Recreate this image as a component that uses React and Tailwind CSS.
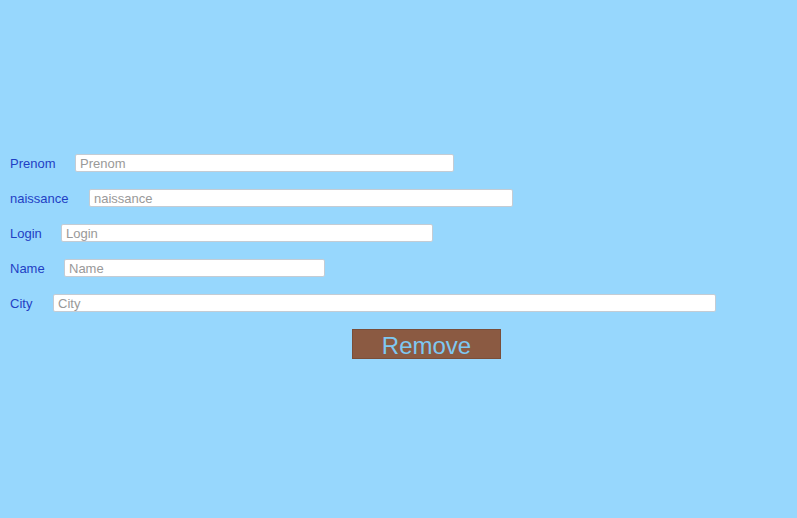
import React from "react";

const rows = [
  { label: "Prenom", x: 75, w: 379 },
  { label: "naissance", x: 89, w: 424 },
  { label: "Login", x: 61, w: 372 },
  { label: "Name", x: 64, w: 261 },
  { label: "City", x: 53, w: 663 },
];

export default function App() {
  return (
    <div
      className="w-[797px] h-[518px] bg-[#97d7fd] pt-[154px] pl-[10px]"
      style={{ fontFamily: '"Liberation Sans", Arial, sans-serif' }}
    >
      <div className="flex flex-col gap-[17px]">
        {rows.map((r) => (
          <div key={r.label} className="flex items-center h-[18px]">
            <span
              style={{ width: r.x - 10 }}
              className="shrink-0 text-[13px] leading-none text-[#1f3fc4]"
            >
              {r.label}
            </span>
            <input
              placeholder={r.label}
              style={{ width: r.w }}
              className="h-[18px] bg-white border border-[#c4ccd4] rounded-[2px] px-[4px] text-[13px] leading-none placeholder:text-[#999999] outline-none"
            />
          </div>
        ))}
      </div>
      <div className="mt-[17px] ml-[342px]">
        <button className="w-[149px] h-[30px] pt-[3px] bg-[#8b5a42] border border-[#7a4e39] text-[#7ec8f2] text-[24px] leading-none flex items-center justify-center">
          Remove
        </button>
      </div>
    </div>
  );
}
